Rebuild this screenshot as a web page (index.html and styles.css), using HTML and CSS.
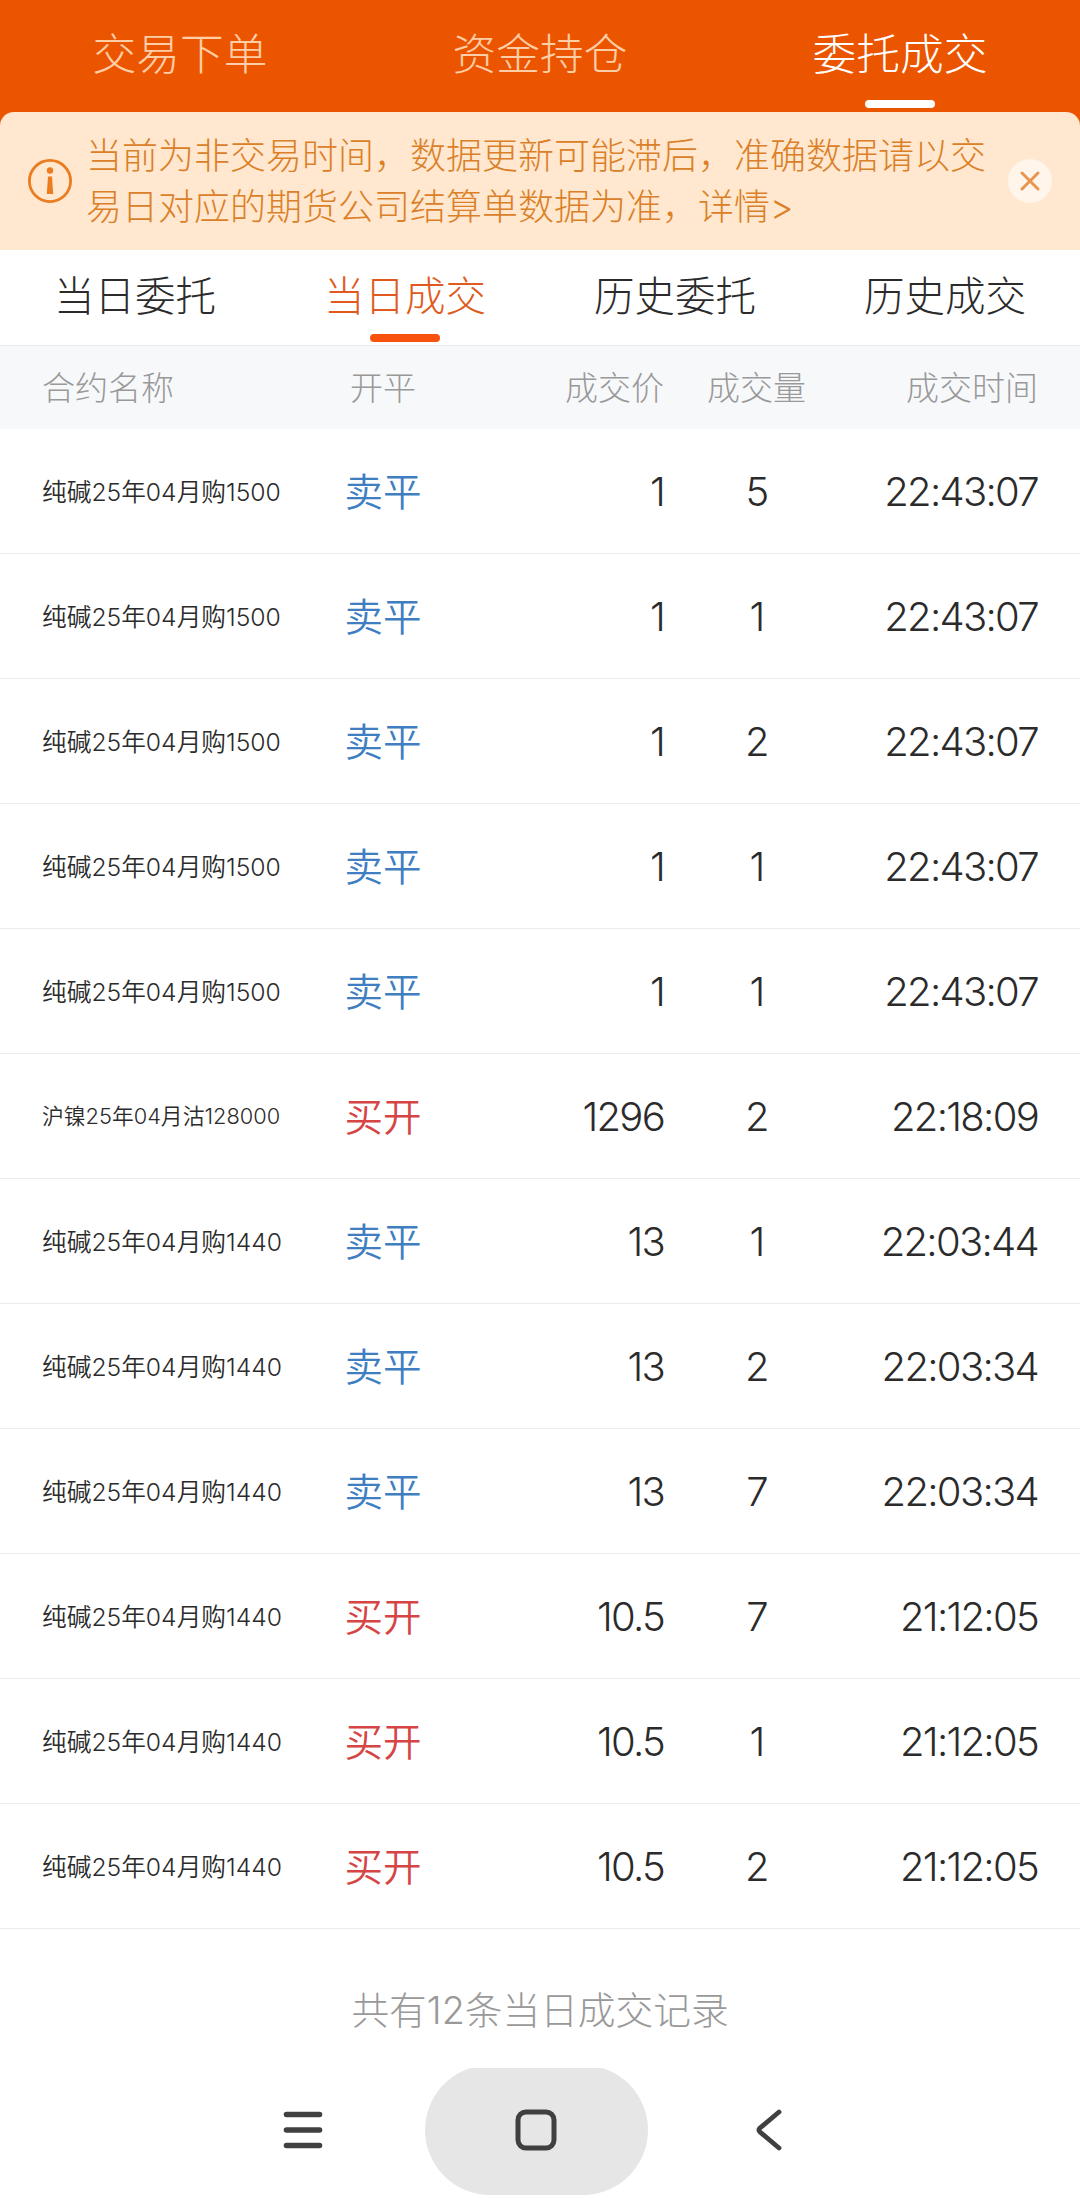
FILE: index.html
```html
<!DOCTYPE html>
<html lang="zh-CN">
<head>
    <meta charset="UTF-8">
    <meta name="viewport" content="width=device-width, initial-scale=1.0">
    <title>当日成交</title>
    <link rel="stylesheet" href="styles.css">
</head>
<body>
    <header class="top">
        <nav class="top-tabs">
            <a class="top-tab">交易下单</a>
            <a class="top-tab">资金持仓</a>
            <a class="top-tab active">委托成交</a>
        </nav>
        <div class="notice">
            <svg class="notice-icon" viewBox="0 0 44 44">
                <circle cx="22" cy="22" r="20.6" fill="none" stroke="#ec7c20" stroke-width="2.8"/>
                <circle cx="22" cy="11.5" r="3.2" fill="#ec7c20"/>
                <path d="M20 17.5h4l1.2 17.5h-6.4z" fill="#ec7c20"/>
            </svg>
            <p class="notice-text">当前为非交易时间，数据更新可能滞后，准确数据请以交易日对应的期货公司结算单数据为准，详情&gt;</p>
            <svg class="notice-close" viewBox="0 0 44 44">
                <circle cx="22" cy="22" r="22" fill="#fff5ea"/>
                <path d="M14 14l16 16M30 14L14 30" stroke="#e8954f" stroke-width="3" stroke-linecap="round"/>
            </svg>
        </div>
    </header>

    <nav class="sub-tabs">
        <a class="sub-tab">当日委托</a>
        <a class="sub-tab active">当日成交</a>
        <a class="sub-tab">历史委托</a>
        <a class="sub-tab">历史成交</a>
    </nav>

    <main>
        <div class="row row-head">
            <span>合约名称</span>
            <span class="side">开平</span>
            <span class="price">成交价</span>
            <span class="volume">成交量</span>
            <span class="time">成交时间</span>
        </div>
        <div class="row">
            <span class="name">纯碱25年04月购1500</span>
            <span class="side sell">卖平</span>
            <span class="price">1</span>
            <span class="volume">5</span>
            <span class="time">22:43:07</span>
        </div>
        <div class="row">
            <span class="name">纯碱25年04月购1500</span>
            <span class="side sell">卖平</span>
            <span class="price">1</span>
            <span class="volume">1</span>
            <span class="time">22:43:07</span>
        </div>
        <div class="row">
            <span class="name">纯碱25年04月购1500</span>
            <span class="side sell">卖平</span>
            <span class="price">1</span>
            <span class="volume">2</span>
            <span class="time">22:43:07</span>
        </div>
        <div class="row">
            <span class="name">纯碱25年04月购1500</span>
            <span class="side sell">卖平</span>
            <span class="price">1</span>
            <span class="volume">1</span>
            <span class="time">22:43:07</span>
        </div>
        <div class="row">
            <span class="name">纯碱25年04月购1500</span>
            <span class="side sell">卖平</span>
            <span class="price">1</span>
            <span class="volume">1</span>
            <span class="time">22:43:07</span>
        </div>
        <div class="row">
            <span class="name long">沪镍25年04月沽128000</span>
            <span class="side buy">买开</span>
            <span class="price">1296</span>
            <span class="volume">2</span>
            <span class="time">22:18:09</span>
        </div>
        <div class="row">
            <span class="name">纯碱25年04月购1440</span>
            <span class="side sell">卖平</span>
            <span class="price">13</span>
            <span class="volume">1</span>
            <span class="time">22:03:44</span>
        </div>
        <div class="row">
            <span class="name">纯碱25年04月购1440</span>
            <span class="side sell">卖平</span>
            <span class="price">13</span>
            <span class="volume">2</span>
            <span class="time">22:03:34</span>
        </div>
        <div class="row">
            <span class="name">纯碱25年04月购1440</span>
            <span class="side sell">卖平</span>
            <span class="price">13</span>
            <span class="volume">7</span>
            <span class="time">22:03:34</span>
        </div>
        <div class="row">
            <span class="name">纯碱25年04月购1440</span>
            <span class="side buy">买开</span>
            <span class="price">10.5</span>
            <span class="volume">7</span>
            <span class="time">21:12:05</span>
        </div>
        <div class="row">
            <span class="name">纯碱25年04月购1440</span>
            <span class="side buy">买开</span>
            <span class="price">10.5</span>
            <span class="volume">1</span>
            <span class="time">21:12:05</span>
        </div>
        <div class="row">
            <span class="name">纯碱25年04月购1440</span>
            <span class="side buy">买开</span>
            <span class="price">10.5</span>
            <span class="volume">2</span>
            <span class="time">21:12:05</span>
        </div>
        <p class="summary">共有12条当日成交记录</p>
    </main>

    <footer class="sys-nav">
        <svg class="sys-icon" viewBox="0 0 44 44">
            <path d="M5.5 6.5h33M5.5 22h33M5.5 37.5h33" stroke="#404040" stroke-width="5.6" stroke-linecap="round"/>
        </svg>
        <div class="home">
            <svg class="sys-icon" viewBox="0 0 44 44">
                <rect x="4" y="4" width="36" height="36" rx="8" fill="none" stroke="#404040" stroke-width="5"/>
            </svg>
        </div>
        <svg class="sys-icon" viewBox="0 0 44 44">
            <path d="M31 4L12 20Q10 22 12 24L31 40" fill="none" stroke="#404040" stroke-width="4.8" stroke-linecap="round"/>
        </svg>
    </footer>
</body>
</html>
```

FILE: styles.css
```css
* {
    box-sizing: border-box;
    margin: 0;
    padding: 0;
}

body {
    display: flex;
    flex-direction: column;
    height: 2198px;
    font-family: Inter, "Noto Sans CJK SC", sans-serif;
    font-weight: 300;
    background-color: #fff;
    color: #2b2b2b;
    overflow: hidden;
}

.top {
    background-color: #eb5500;
}

.top-tabs {
    display: grid;
    grid-template-columns: repeat(3, 1fr);
    height: 112px;
}

.top-tab {
    display: flex;
    flex-direction: column;
    align-items: center;
    padding-top: 23px;
    font-size: 43.7px;
    line-height: 64px;
    color: #ffcda6;
}

.top-tab.active {
    color: #fff;
}

.top-tab.active::after,
.sub-tab.active::after {
    content: "";
    width: 70px;
    height: 8px;
    border-radius: 4px;
    background-color: #fff;
}

.top-tab.active::after {
    margin-top: 13px;
}

.notice {
    display: flex;
    align-items: center;
    height: 138px;
    padding: 0 28px;
    background-color: #ffe8cf;
    border-radius: 14px 14px 0 0;
}

.notice-icon,
.notice-close {
    flex: none;
    width: 44px;
    height: 44px;
}

.notice-text {
    width: 904px;
    margin: 0 18px 0 14px;
    padding-top: 2px;
    font-size: 36px;
    line-height: 51px;
    color: #db8028;
}

.sub-tabs {
    display: grid;
    grid-template-columns: repeat(4, 1fr);
    height: 96px;
    border-bottom: 1px solid #ebebeb;
}

.sub-tab {
    display: flex;
    flex-direction: column;
    align-items: center;
    padding-top: 17px;
    font-size: 40.5px;
    line-height: 60px;
}

.sub-tab.active {
    color: #e05a20;
}

.sub-tab.active::after {
    margin-top: 7px;
    background-color: #f9520e;
}

.row {
    display: grid;
    grid-template-columns: 261px 160px 201px 187px 187px;
    align-items: center;
    height: 125px;
    padding: 0 42px;
    border-bottom: 1px solid #ebebeb;
    font-size: 40px;
    letter-spacing: -1.7px;
    white-space: nowrap;
}

.row-head {
    height: 83px;
    padding-bottom: 4px;
    border-bottom: none;
    background-color: #f7f8fa;
    color: #999;
    font-size: 33px;
    letter-spacing: 0;
}

.name {
    padding-bottom: 3px;
    font-size: 24.7px;
    font-weight: 350;
    letter-spacing: 0;
}

.name.long {
    font-size: 21.8px;
}

.side,
.volume {
    text-align: center;
}

.volume {
    padding-right: 2px;
}

.price,
.time {
    text-align: right;
}

.sell,
.buy {
    padding-bottom: 5px;
    font-size: 38.5px;
    font-weight: 350;
    letter-spacing: 0;
}

.sell {
    color: #3f7fc1;
}

.buy {
    color: #d54545;
}

.summary {
    padding-top: 53px;
    font-size: 37.7px;
    line-height: 56px;
    text-align: center;
    color: #999;
}

/* system navigation bar */
.sys-nav {
    display: flex;
    justify-content: center;
    align-items: center;
    gap: 100px;
    height: 130px;
    margin-top: auto;
    padding: 0 8px 6px 0;
    overflow: hidden;
}

.sys-icon {
    width: 44px;
    height: 44px;
}

.home {
    display: flex;
    flex: none;
    justify-content: center;
    align-items: center;
    width: 223px;
    height: 130px;
    border-radius: 65px;
    background-color: #e6e6e6;
}
```
